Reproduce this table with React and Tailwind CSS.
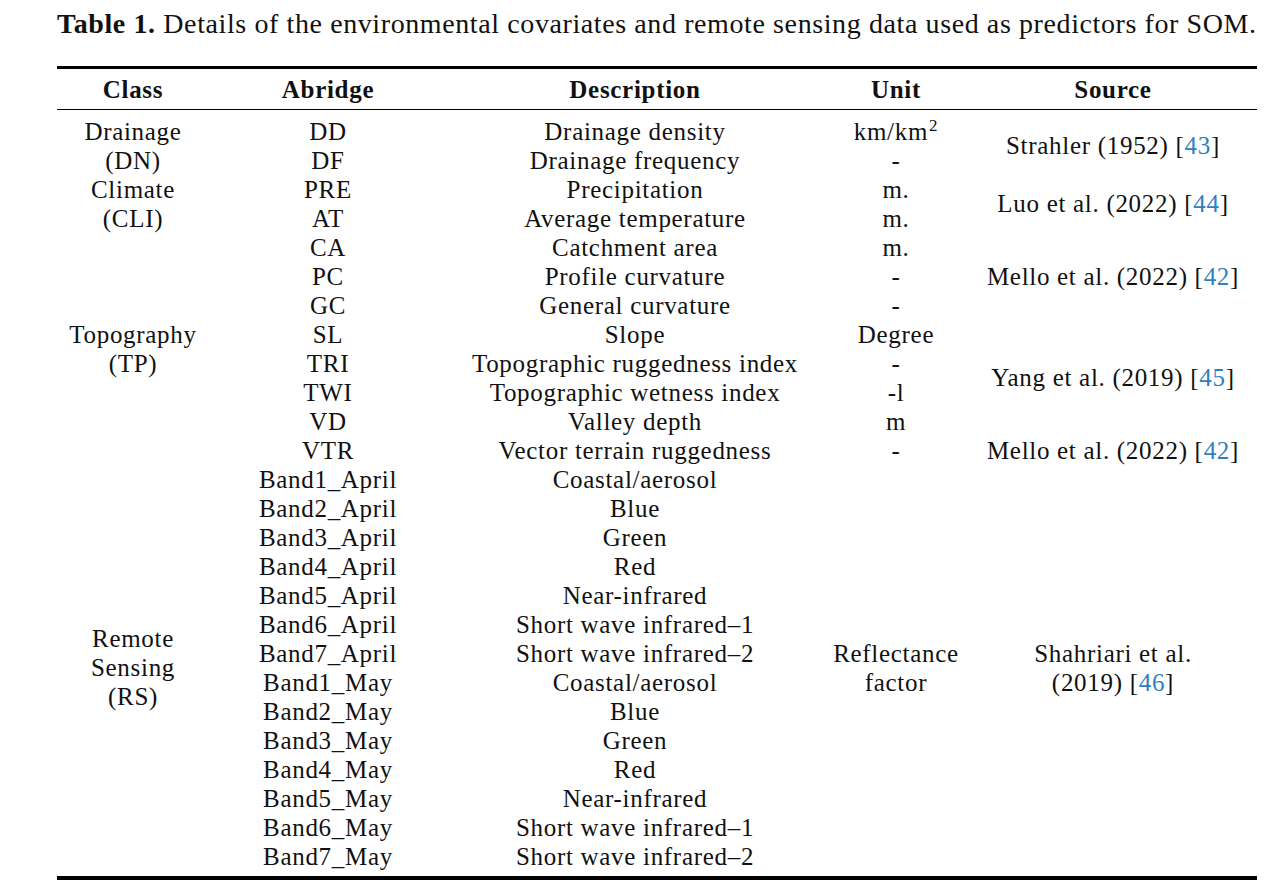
const rows = [
  { abr: 'DD', desc: 'Drainage density', unit: <>km/km<span className="text-[17px] leading-none relative -top-[9px] ml-[1px]">2</span></> },
  { abr: 'DF', desc: 'Drainage frequency', unit: '-' },
  { abr: 'PRE', desc: 'Precipitation', unit: 'm.' },
  { abr: 'AT', desc: 'Average temperature', unit: 'm.' },
  { abr: 'CA', desc: 'Catchment area', unit: 'm.' },
  { abr: 'PC', desc: 'Profile curvature', unit: '-' },
  { abr: 'GC', desc: 'General curvature', unit: '-' },
  { abr: 'SL', desc: 'Slope', unit: 'Degree' },
  { abr: 'TRI', desc: 'Topographic ruggedness index', unit: '-' },
  { abr: 'TWI', desc: 'Topographic wetness index', unit: '-l' },
  { abr: 'VD', desc: 'Valley depth', unit: 'm' },
  { abr: 'VTR', desc: 'Vector terrain ruggedness', unit: '-' },
  { abr: 'Band1_April', desc: 'Coastal/aerosol' },
  { abr: 'Band2_April', desc: 'Blue' },
  { abr: 'Band3_April', desc: 'Green' },
  { abr: 'Band4_April', desc: 'Red' },
  { abr: 'Band5_April', desc: 'Near-infrared' },
  { abr: 'Band6_April', desc: 'Short wave infrared–1' },
  { abr: 'Band7_April', desc: 'Short wave infrared–2' },
  { abr: 'Band1_May', desc: 'Coastal/aerosol' },
  { abr: 'Band2_May', desc: 'Blue' },
  { abr: 'Band3_May', desc: 'Green' },
  { abr: 'Band4_May', desc: 'Red' },
  { abr: 'Band5_May', desc: 'Near-infrared' },
  { abr: 'Band6_May', desc: 'Short wave infrared–1' },
  { abr: 'Band7_May', desc: 'Short wave infrared–2' },
];

// class column groups, keyed by starting row
const classes = {
  0: { span: 2, lines: ['Drainage', '(DN)'] },
  2: { span: 2, lines: ['Climate', '(CLI)'] },
  4: { span: 8, lines: ['Topography', '(TP)'] },
  12: { span: 14, lines: ['Remote', 'Sensing', '(RS)'] },
};

const Ref = ({ n }) => <span className="text-[#2f7fc1]">{n}</span>;

const sources = {
  0: { span: 2, body: <>Strahler (1952) [<Ref n="43" />]</> },
  2: { span: 2, body: <>Luo et al. (2022) [<Ref n="44" />]</> },
  4: { span: 3, body: <>Mello et al. (2022) [<Ref n="42" />]</> },
  7: { span: 4, body: <>Yang et al. (2019) [<Ref n="45" />]</> },
  11: { span: 1, body: <>Mello et al. (2022) [<Ref n="42" />]</> },
  12: { span: 14, body: <>Shahriari et al.<br />(2019) [<Ref n="46" />]</> },
};

export default function App() {
  return (
    <div className="min-h-screen bg-white text-[#111] pl-[57px] pt-[8px]" style={{ fontFamily: '"Liberation Serif", "DejaVu Serif", serif' }}>
      <p className="text-[28px] leading-[32px] whitespace-nowrap tracking-[0.6px]">
        <span className="font-bold">Table 1.</span> Details of the environmental covariates and remote sensing data used as predictors for SOM.
      </p>

      <table className="w-[1200px] mt-[26px] border-collapse text-[25px] leading-[29px] tracking-[0.7px] text-center table-fixed">
        <colgroup>
          <col className="w-[152px]" />
          <col className="w-[238px]" />
          <col className="w-[376px]" />
          <col className="w-[146px]" />
          <col className="w-[288px]" />
        </colgroup>
        <thead>
          <tr className="border-t-[3px] border-b border-black h-[42px] font-bold">
            <th>Class</th>
            <th>Abridge</th>
            <th>Description</th>
            <th>Unit</th>
            <th>Source</th>
          </tr>
        </thead>
        <tbody className="border-b-[4px] border-black">
          <tr className="h-[7px]"><td colSpan={5}></td></tr>
          {rows.map((r, i) => (
            <tr key={r.abr} className="h-[29px]">
              {classes[i] && (
                <td rowSpan={classes[i].span} className="align-middle">
                  {classes[i].lines.map((l) => (
                    <div key={l}>{l}</div>
                  ))}
                </td>
              )}
              <td>{r.abr}</td>
              <td>{r.desc}</td>
              {r.unit !== undefined ? (
                <td>{r.unit}</td>
              ) : (
                i === 12 && (
                  <td rowSpan={14} className="align-middle">
                    <div>Reflectance</div>
                    <div>factor</div>
                  </td>
                )
              )}
              {sources[i] && (
                <td rowSpan={sources[i].span} className="align-middle">
                  {sources[i].body}
                </td>
              )}
            </tr>
          ))}
          <tr className="h-[7px]"><td colSpan={5}></td></tr>
        </tbody>
      </table>
    </div>
  );
}
